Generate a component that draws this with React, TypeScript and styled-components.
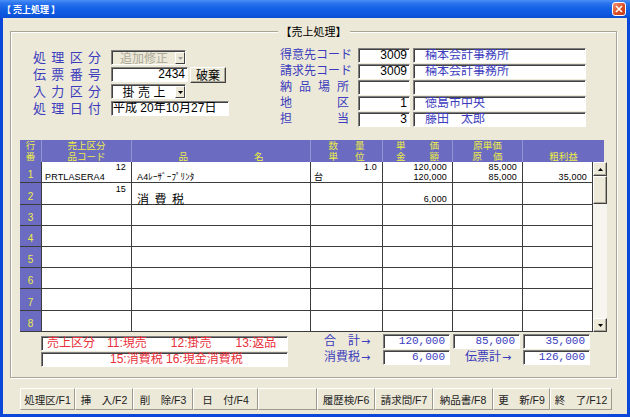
import React, { ReactElement } from "react";
import styled, { createGlobalStyle } from "styled-components";

const GlobalStyle = createGlobalStyle`
  * { box-sizing: border-box; }
  html, body { margin: 0; padding: 0; }
  body {
    width: 630px;
    height: 417px;
    overflow: hidden;
    background: #ece9d8;
    font-family: "Liberation Sans", "Noto Sans CJK JP", sans-serif;
  }
`;

const COLS = [22, 90, 179, 72, 70, 70, 70];
const gridCols = COLS.map((w) => `${w}px`).join(" ");
const headCols = [...COLS.slice(0, 6), 81].map((w) => `${w}px`).join(" ");
const ROW_HEIGHTS = [21, 22, 21, 21, 21, 21, 22, 21];

const LABEL_BLUE = "#3b3bbd";
const JP = `"Noto Sans CJK JP", sans-serif`;
const LATIN_JP = `"Liberation Sans", "Noto Sans CJK JP", sans-serif`;

const Window = styled.div`
  width: 630px;
  height: 417px;
  display: flex;
  flex-direction: column;
  background: #ece9d8;
`;

const TitleBar = styled.div`
  height: 18px;
  flex: none;
  display: flex;
  align-items: center;
  justify-content: space-between;
  padding: 0 4px 0 2px;
  background: linear-gradient(#4a8ff7 0%, #2b74ef 18%, #1663e6 45%, #0d58df 75%, #0a4fd5 100%);
`;

const Title = styled.span`
  color: #fff;
  font-weight: bold;
  font-size: 9px;
  font-family: ${JP};
  white-space: pre;
`;

const CloseButton = styled.div`
  width: 14px;
  height: 14px;
  border: 1px solid #fff;
  border-radius: 3px;
  background: linear-gradient(135deg, #f0977b 0%, #dc4d24 55%, #c23a16 100%);
  display: flex;
  align-items: center;
  justify-content: center;
`;

const Client = styled.div`
  flex: 1;
  display: flex;
  flex-direction: column;
  border: 3px solid #0b47d8;
  border-top: 0;
  padding: 13px 10px 0 7px;
`;

const GroupBox = styled.div`
  position: relative;
  height: 347px;
  flex: none;
  border: 1px solid #a8a497;
  box-shadow: inset 1px 1px 0 #fff, 1px 1px 0 #fff;
  padding: 16px 9px 0 9px;
`;

const Legend = styled.span`
  position: absolute;
  top: -9px;
  left: 50%;
  transform: translateX(-50%);
  padding: 0 3px;
  background: #ece9d8;
  font-family: ${JP};
  font-size: 11px;
  line-height: 16px;
  color: #000;
`;

const FormArea = styled.div`
  display: flex;
  height: 92px;
  padding-left: 13px;
`;

const LeftForm = styled.div`
  width: 247px;
  padding-top: 2px;
  display: grid;
  grid-template-columns: 78px auto;
  grid-auto-rows: 15px;
  row-gap: 2px;
  align-content: start;
  align-items: center;
`;

const RightForm = styled.div`
  display: grid;
  grid-template-columns: 75px 52px 173px;
  column-gap: 3px;
  grid-auto-rows: 15px;
  row-gap: 1px;
  align-content: start;
  align-items: center;
`;

const Label = styled.div<{ $size: number }>`
  display: flex;
  color: ${LABEL_BLUE};
  font-family: ${LATIN_JP};
  font-size: ${(p) => p.$size}px;
  line-height: 15px;
  white-space: nowrap;
`;

const SpreadBox = styled.span<{ $width?: number }>`
  display: inline-flex;
  justify-content: space-between;
  width: ${(p) => (p.$width ? `${p.$width}px` : "auto")};
`;

const Spread = ({ text, width }: { text: string; width?: number }): ReactElement => (
  <SpreadBox $width={width}>
    {[...text].map((c, i) => (
      <span key={i}>{c}</span>
    ))}
  </SpreadBox>
);

const Sunken = styled.div`
  border: 1px solid;
  border-color: #808080 #fff #fff #808080;
  box-shadow: inset 1px 1px 0 #404040;
`;

const Field = styled(Sunken)<{ $w: number; $align?: "left" | "right"; $color?: string; $pad?: number }>`
  width: ${(p) => p.$w}px;
  height: 15px;
  display: flex;
  align-items: center;
  justify-content: ${(p) => (p.$align === "right" ? "flex-end" : "flex-start")};
  padding: ${(p) => (p.$align === "right" ? `0 ${p.$pad ?? 2}px 0 0` : `0 0 0 ${p.$pad ?? 2}px`)};
  background: #fff;
  color: ${(p) => p.$color ?? "#000"};
  font-size: 12px;
  line-height: 13px;
  white-space: nowrap;
  overflow: hidden;
`;

const Combo = styled(Sunken)<{ $disabled?: boolean }>`
  width: 75px;
  height: 15px;
  display: flex;
  padding: 1px 0 0 1px;
  background: ${(p) => (p.$disabled ? "#ece9d8" : "#fff")};
`;

const ComboText = styled.div<{ $disabled?: boolean }>`
  flex: 1;
  display: flex;
  align-items: center;
  justify-content: center;
  font-family: ${JP};
  font-size: 12px;
  line-height: 12px;
  color: ${(p) => (p.$disabled ? "#aca899" : "#000")};
`;

const DropButton = styled.div`
  width: 10px;
  height: 100%;
  flex: none;
  background: #ece9d8;
  border: 1px solid;
  border-color: #fff #404040 #404040 #fff;
  display: flex;
  align-items: center;
  justify-content: center;
`;

const FieldWithButton = styled.div`
  display: flex;
  gap: 2px;
  align-items: center;
`;

const PushButton = styled.div`
  width: 36px;
  height: 16px;
  background: #ece9d8;
  border: 1px solid;
  border-color: #fff #404040 #404040 #fff;
  box-shadow: inset -1px -1px 0 #aca899;
  display: flex;
  align-items: center;
  justify-content: center;
  font-family: ${JP};
  font-size: 12px;
  color: #000;
`;

const Table = styled.div`
  display: flex;
  flex-direction: column;
`;

const Header = styled.div`
  display: grid;
  grid-template-columns: ${headCols};
  width: 584px;
  height: 22px;
  background: #6b6bc1;
  color: #eeee44;
  font-family: ${LATIN_JP};
  font-size: 9.5px;
  line-height: 11px;
`;

const HeadCell = styled.div`
  display: flex;
  flex-direction: column;
  align-items: center;
  border-right: 1px solid rgba(255, 255, 255, 0.28);
  &:last-child {
    border-right: 0;
  }
`;

const HeadLine = styled.div`
  height: 11px;
  display: flex;
  white-space: nowrap;
`;

const Body = styled.div`
  display: flex;
  height: 170px;
`;

const Rows = styled.div`
  width: 573px;
  display: flex;
  flex-direction: column;
  background: #fff;
`;

const Row = styled.div<{ $h: number }>`
  display: grid;
  grid-template-columns: ${gridCols};
  height: ${(p) => p.$h}px;
  flex: none;
  border-bottom: 1px solid #3c3c3c;
`;

const NoCell = styled.div`
  background: #6b6bc1;
  color: #eeee44;
  font-size: 10px;
  line-height: 10px;
  display: flex;
  align-items: flex-end;
  justify-content: center;
  padding-bottom: 2px;
  border-right: 1px solid #3c3c3c;
`;

const Cell = styled.div`
  display: flex;
  flex-direction: column;
  justify-content: flex-end;
  border-right: 1px solid #3c3c3c;
  color: #000;
`;

const CellLine = styled.div<{ $align: "left" | "right"; $pad: number; $big?: boolean }>`
  height: 10px;
  line-height: ${(p) => (p.$big ? 9 : 10)}px;
  white-space: nowrap;
  text-align: ${(p) => p.$align};
  padding: ${(p) => (p.$align === "right" ? "0 5px 0 0" : `0 0 0 ${p.$pad}px`)};
  font-family: ${(p) => (p.$big ? JP : LATIN_JP)};
  font-size: ${(p) => (p.$big ? 12 : 9)}px;
  letter-spacing: ${(p) => (p.$big ? "5.5px" : "0.15px")};
`;

const ScrollBar = styled.div`
  width: 14px;
  display: flex;
  flex-direction: column;
  background: #f4f3ee;
`;

const ScrollButton = styled.div<{ $h?: number }>`
  height: ${(p) => p.$h ?? 14}px;
  flex: none;
  background: #ece9d8;
  border: 1px solid;
  border-color: #fff #404040 #404040 #fff;
  box-shadow: inset -1px -1px 0 #aca899;
  display: flex;
  align-items: center;
  justify-content: center;
`;

const Track = styled.div`
  flex: 1;
  background: #f6f5f0;
`;

const Summary = styled.div`
  display: grid;
  grid-template-columns: ${gridCols};
  grid-template-rows: 15px 15px;
  row-gap: 1px;
  margin-top: 2px;
`;

const Notice = styled(Sunken)<{ $indent: number }>`
  grid-column: 2 / span 2;
  width: 247px;
  margin: 2px 0 -2px -1px;
  background: #fff;
  color: #e8303a;
  font-size: 12px;
  line-height: 13px;
  white-space: pre;
  padding-left: ${(p) => p.$indent}px;
  display: flex;
  align-items: center;
`;

const SumLabel = styled.div`
  color: ${LABEL_BLUE};
  font-family: ${LATIN_JP};
  font-size: 12px;
  line-height: 15px;
  text-align: center;
  white-space: pre;
`;

const ArrowGlyph = styled.span`
  font-family: "DejaVu Sans", sans-serif;
  font-size: 11px;
  margin-left: 1px;
`;

const SumBox = styled(Sunken)`
  width: 67px;
  background: #fff;
  color: ${LABEL_BLUE};
  font-family: "Liberation Mono", monospace;
  font-size: 11px;
  line-height: 13px;
  text-align: right;
  padding-right: 4px;
`;

const FnBar = styled.div`
  display: flex;
  margin: 10px 0 0 10px;
  height: 22px;
`;

const FnButton = styled.div<{ $w: number }>`
  width: ${(p) => p.$w}px;
  height: 100%;
  border: 1px solid;
  border-color: #fff #9d9a8c #9d9a8c #fff;
  display: flex;
  align-items: center;
  justify-content: center;
  font-size: 10.5px;
  color: #222;
  white-space: pre;
`;

const Arrow = ({ up, color = "#000" }: { up?: boolean; color?: string }): ReactElement => (
  <svg width="5" height="3" viewBox="0 0 5 3">
    <path d={up ? "M0 3 L2.5 0 L5 3 Z" : "M0 0 L5 0 L2.5 3 Z"} fill={color} />
  </svg>
);

interface ICell {
  top?: string;
  bottom?: string;
  big?: boolean;
}

interface IRow {
  no: number;
  cells: ICell[];
}

const columnLayout: { align: "left" | "right"; pad: number }[] = [
  { align: "left", pad: 3 },
  { align: "left", pad: 5 },
  { align: "left", pad: 3 },
  { align: "right", pad: 0 },
  { align: "right", pad: 0 },
  { align: "right", pad: 0 },
];

const rows: IRow[] = [
  {
    no: 1,
    cells: [
      { top: "12", bottom: "PRTLASERA4" },
      { bottom: "A4ﾚｰｻﾞｰﾌﾟﾘﾝﾀ" },
      { top: "1.0", bottom: "台" },
      { top: "120,000", bottom: "120,000" },
      { top: "85,000", bottom: "85,000" },
      { bottom: "35,000" },
    ],
  },
  {
    no: 2,
    cells: [{ top: "15" }, { bottom: "消費税", big: true }, {}, { bottom: "6,000" }, {}, {}],
  },
  ...[3, 4, 5, 6, 7, 8].map((no) => ({ no, cells: [{}, {}, {}, {}, {}, {}] })),
];

const headers: { top?: [string, number?]; bottom?: [string, number?] }[] = [
  { top: ["行"], bottom: ["番"] },
  { top: ["売上区分"], bottom: ["品コード"] },
  { bottom: ["品名", 85] },
  { top: ["数量", 36], bottom: ["単位", 36] },
  { top: ["単価", 43], bottom: ["金額", 43] },
  { top: ["原単価"], bottom: ["原価", 30] },
  { bottom: ["粗利益"] },
];

const fnKeys: [string, number][] = [
  ["処理区/F1", 55],
  ["挿　入/F2", 58],
  ["削　除/F3", 60],
  ["日　付/F4", 65],
  ["", 59],
  ["履歴検/F6", 58],
  ["請求問/F7", 58],
  ["納品書/F8", 60],
  ["更　新/F9", 57],
  ["終　了/F12", 62],
];

const rightRows: { label: string; spread: boolean; code: string; name: string }[] = [
  { label: "得意先コード", spread: false, code: "3009", name: "楠本会計事務所" },
  { label: "請求先コード", spread: false, code: "3009", name: "楠本会計事務所" },
  { label: "納品場所", spread: true, code: "", name: "" },
  { label: "地区", spread: true, code: "1", name: "徳島市中央" },
  { label: "担当", spread: true, code: "3", name: "藤田　太郎" },
];

const leftLabels = ["処理区分", "伝票番号", "入力区分", "処理日付"];

const App = (): ReactElement => {
  const leftControls = [
    <Combo $disabled key="a">
      <ComboText $disabled>追加修正</ComboText>
      <DropButton>
        <Arrow color="#a0a0a0" />
      </DropButton>
    </Combo>,
    <FieldWithButton key="b">
      <Field $w={77} $align="right">
        2434
      </Field>
      <PushButton>破棄</PushButton>
    </FieldWithButton>,
    <Combo key="c">
      <ComboText>
        <Spread text="掛売上" width={43} />
      </ComboText>
      <DropButton>
        <Arrow />
      </DropButton>
    </Combo>,
    <Field $w={118} $pad={1} key="d">
      平成 20年10月27日
    </Field>,
  ];

  return (
    <>
      <GlobalStyle />
      <Window>
        <TitleBar>
          <Title>【 売上処理 】</Title>
          <CloseButton>
            <svg width="8" height="8" viewBox="0 0 8 8">
              <path d="M1 1 L7 7 M7 1 L1 7" stroke="#fff" strokeWidth="1.6" />
            </svg>
          </CloseButton>
        </TitleBar>
        <Client>
          <GroupBox>
            <Legend>【売上処理】</Legend>
            <FormArea>
              <LeftForm>
                {leftLabels.map((label, i) => (
                  <React.Fragment key={label}>
                    <Label $size={13}>
                      <Spread text={label} width={68} />
                    </Label>
                    {leftControls[i]}
                  </React.Fragment>
                ))}
              </LeftForm>
              <RightForm>
                {rightRows.map((r) => (
                  <React.Fragment key={r.label}>
                    <Label $size={12}>{r.spread ? <Spread text={r.label} width={69} /> : r.label}</Label>
                    <Field $w={52} $align="right">
                      {r.code}
                    </Field>
                    <Field $w={173} $pad={11} $color={LABEL_BLUE}>
                      {r.name}
                    </Field>
                  </React.Fragment>
                ))}
              </RightForm>
            </FormArea>

            <Table>
              <Header>
                {headers.map((h, i) => (
                  <HeadCell key={i}>
                    <HeadLine>{h.top && <Spread text={h.top[0]} width={h.top[1]} />}</HeadLine>
                    <HeadLine>{h.bottom && <Spread text={h.bottom[0]} width={h.bottom[1]} />}</HeadLine>
                  </HeadCell>
                ))}
              </Header>
              <Body>
                <Rows>
                  {rows.map((row, r) => (
                    <Row key={row.no} $h={ROW_HEIGHTS[r]}>
                      <NoCell>{row.no}</NoCell>
                      {row.cells.map((c, i) => (
                        <Cell key={i}>
                          <CellLine $align="right" $pad={0}>
                            {c.top}
                          </CellLine>
                          <CellLine $align={columnLayout[i].align} $pad={columnLayout[i].pad} $big={c.big}>
                            {c.bottom}
                          </CellLine>
                        </Cell>
                      ))}
                    </Row>
                  ))}
                </Rows>
                <ScrollBar>
                  <ScrollButton>
                    <Arrow up />
                  </ScrollButton>
                  <ScrollButton $h={28} />
                  <Track />
                  <ScrollButton>
                    <Arrow />
                  </ScrollButton>
                </ScrollBar>
              </Body>
            </Table>

            <Summary>
              <Notice $indent={5}>売上区分　11:現売　　12:掛売　　13:返品</Notice>
              <SumLabel>
                合　計<ArrowGlyph>→</ArrowGlyph>
              </SumLabel>
              <SumBox>120,000</SumBox>
              <SumBox>85,000</SumBox>
              <SumBox>35,000</SumBox>
              <Notice $indent={68}>15:消費税 16:現金消費税</Notice>
              <SumLabel>
                消費税<ArrowGlyph>→</ArrowGlyph>
              </SumLabel>
              <SumBox>6,000</SumBox>
              <SumLabel>
                伝票計<ArrowGlyph>→</ArrowGlyph>
              </SumLabel>
              <SumBox>126,000</SumBox>
            </Summary>
          </GroupBox>

          <FnBar>
            {fnKeys.map(([text, w], i) => (
              <FnButton key={i} $w={w}>
                {text}
              </FnButton>
            ))}
          </FnBar>
        </Client>
      </Window>
    </>
  );
};

export default App;
